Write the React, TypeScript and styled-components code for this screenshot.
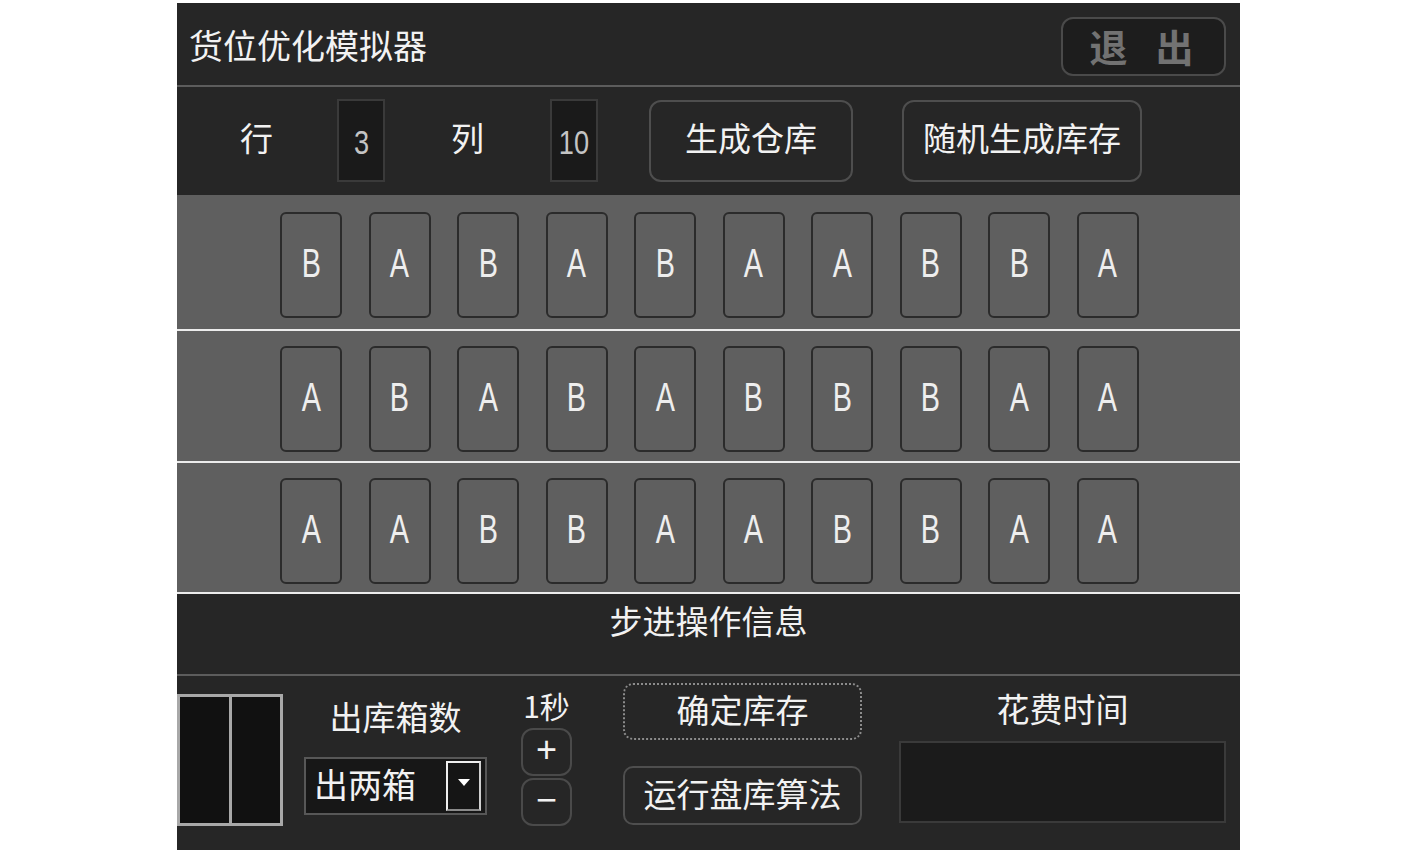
import { ReactElement } from 'react';
import styled, { createGlobalStyle } from 'styled-components';

const GlobalStyle = createGlobalStyle`
    html, body {
        margin: 0;
        padding: 0;
        background: #ffffff;
        overflow: hidden;
    }
    * {
        box-sizing: border-box;
    }
`;

const CJK = `'Noto Sans CJK SC', 'Noto Sans', sans-serif`;

const Panel = styled.div`
    width: 1063px;
    height: 847px;
    margin: 3px auto 0;
    background: #262626;
    color: #f2f2f2;
    font-family: ${CJK};
    display: flex;
    flex-direction: column;
`;

const Header = styled.header`
    height: 84px;
    display: flex;
    align-items: center;
    justify-content: space-between;
    padding: 0 14px 0 12px;
    border-bottom: 2px solid #5c5c5c;
    flex-shrink: 0;
`;

const Title = styled.h1`
    margin: 2px 0 0;
    font-size: 34px;
    font-weight: 400;
    line-height: 1;
`;

const ExitButton = styled.button`
    width: 165px;
    height: 59px;
    margin-top: 4px;
    border: 2px solid #4a4a4a;
    border-radius: 12px;
    background: #1d1d1d;
    color: #727272;
    font-family: ${CJK};
    font-size: 38px;
    font-weight: 700;
    letter-spacing: 28px;
    padding: 0 0 0 24px;
    line-height: 1;
`;

const Toolbar = styled.div`
    height: 108px;
    display: flex;
    align-items: center;
    padding-left: 63px;
    flex-shrink: 0;
`;

const FieldLabel = styled.span<{ $after: number }>`
    font-size: 33px;
    line-height: 1;
    margin-right: ${(p) => p.$after}px;
    margin-top: -8px;
`;

const NumberBox = styled.div<{ $after: number }>`
    width: 48px;
    height: 83px;
    background: #1a1a1a;
    border: 2px solid #3a3a3a;
    color: #c4c4c4;
    font-family: 'Liberation Sans', sans-serif;
    font-size: 34px;
    display: flex;
    align-items: center;
    justify-content: center;
    margin-right: ${(p) => p.$after}px;
    margin-top: -1px;
    padding-top: 4px;
    overflow: hidden;

    & span {
        display: inline-block;
        transform: scaleX(0.8);
    }
`;

const ToolButton = styled.button<{ $width: number; $after?: number }>`
    width: ${(p) => p.$width}px;
    height: 82px;
    margin-right: ${(p) => p.$after ?? 0}px;
    margin-top: -1px;
    border: 2px solid #4e4e4e;
    border-radius: 12px;
    background: transparent;
    color: #f2f2f2;
    font-family: ${CJK};
    font-size: 33px;
    line-height: 1;
    padding: 0 0 6px;
`;

const Grid = styled.div`
    display: flex;
    flex-direction: column;
    flex-shrink: 0;
`;

const ShelfRow = styled.div<{ $height: number; $top: number }>`
    height: ${(p) => p.$height}px;
    background: #5f5f5f;
    border-bottom: 2px solid #ececec;
    display: flex;
    justify-content: center;
    align-items: flex-start;
    gap: 26.5px;
    padding: ${(p) => p.$top}px 0 0 2px;
`;

const Slot = styled.div`
    width: 62px;
    height: 106px;
    border: 2px solid #2b2b2b;
    border-radius: 6px;
    display: flex;
    align-items: center;
    justify-content: center;
    color: #eeeeee;
    font-family: 'Liberation Sans', sans-serif;
    font-size: 40px;
    padding-bottom: 4px;

    & span {
        display: inline-block;
        transform: scaleX(0.72);
    }
`;

const InfoBar = styled.div`
    height: 82px;
    border-bottom: 2px solid #5c5c5c;
    text-align: center;
    font-size: 33px;
    line-height: 1;
    padding-top: 10px;
    flex-shrink: 0;
`;

const Footer = styled.div`
    flex: 1;
    display: flex;
    align-items: flex-start;
`;

const Bins = styled.div`
    width: 106px;
    height: 132px;
    margin-top: 18px;
    border: 3px solid #a8a8a8;
    display: grid;
    grid-template-columns: 1fr 1fr;
    gap: 3px;
    background: #a8a8a8;

    & div {
        background: #111111;
    }
`;

const Column = styled.div<{ $width: number; $left: number }>`
    width: ${(p) => p.$width}px;
    margin-left: ${(p) => p.$left}px;
    display: flex;
    flex-direction: column;
    align-items: center;
`;

const ColumnLabel = styled.div<{ $top: number; $size?: number }>`
    font-size: ${(p) => p.$size ?? 33}px;
    line-height: 1;
    margin-top: ${(p) => p.$top}px;
    white-space: nowrap;
`;

const Select = styled.div`
    width: 183px;
    height: 58px;
    margin-top: 24px;
    background: #171717;
    border: 2px solid #575757;
    display: flex;
    align-items: center;
    justify-content: space-between;
    padding: 0 4px 0 8px;
    font-size: 34px;
    line-height: 1;
`;

const SelectText = styled.span`
    margin-top: -4px;
`;

const DropArrow = styled.div`
    width: 35px;
    height: 50px;
    border: 2px solid #eeeeee;
    border-bottom-color: #8a8a8a;
    border-right-color: #cfcfcf;
    background: #151515;
    display: flex;
    justify-content: center;
    padding-top: 16px;

    &::after {
        content: '';
        width: 0;
        height: 0;
        border-left: 6px solid transparent;
        border-right: 6px solid transparent;
        border-top: 7px solid #ffffff;
    }
`;

const StepButton = styled.button<{ $top: number }>`
    width: 51px;
    height: 48px;
    margin-top: ${(p) => p.$top}px;
    border: 2px solid #4a4a4a;
    border-radius: 12px;
    background: transparent;
    color: #f2f2f2;
    font-family: 'Liberation Sans', sans-serif;
    font-size: 36px;
    line-height: 1;
    padding: 0 0 5px;
`;

const ActionButton = styled.button<{ $top: number; $focused?: boolean }>`
    width: 239px;
    height: ${(p) => (p.$focused ? 57 : 59)}px;
    margin-top: ${(p) => p.$top}px;
    border: 2px ${(p) => (p.$focused ? 'dotted #8c8c8c' : 'solid #4e4e4e')};
    border-radius: 10px;
    background: transparent;
    color: #f2f2f2;
    font-family: ${CJK};
    font-size: 33px;
    line-height: 1;
    padding: 0 0 5px;
`;

const TimeBox = styled.div`
    width: 327px;
    height: 82px;
    margin-top: 16px;
    background: #1b1b1b;
    border: 2px solid #3a3a3a;
`;

const layout: string[][] = [
    ['B', 'A', 'B', 'A', 'B', 'A', 'A', 'B', 'B', 'A'],
    ['A', 'B', 'A', 'B', 'A', 'B', 'B', 'B', 'A', 'A'],
    ['A', 'A', 'B', 'B', 'A', 'A', 'B', 'B', 'A', 'A'],
];

// row heights (incl. white rule) and top padding, as measured per shelf
const rowMetrics = [
    { height: 136, top: 17 },
    { height: 132, top: 15 },
    { height: 131, top: 15 },
];

const App = (): ReactElement => {
    return (
        <>
            <GlobalStyle />
            <Panel>
                <Header>
                    <Title>货位优化模拟器</Title>
                    <ExitButton>退出</ExitButton>
                </Header>

                <Toolbar>
                    <FieldLabel $after={64}>行</FieldLabel>
                    <NumberBox $after={66}>
                        <span>3</span>
                    </NumberBox>
                    <FieldLabel $after={66}>列</FieldLabel>
                    <NumberBox $after={51}>
                        <span>10</span>
                    </NumberBox>
                    <ToolButton $width={204} $after={49}>
                        生成仓库
                    </ToolButton>
                    <ToolButton $width={240}>随机生成库存</ToolButton>
                </Toolbar>

                <Grid>
                    {layout.map((row, rowIndex) => (
                        <ShelfRow
                            key={`row-${rowIndex}`}
                            $height={rowMetrics[rowIndex].height}
                            $top={rowMetrics[rowIndex].top}
                        >
                            {row.map((cell, cellIndex) => (
                                <Slot key={`cell-${rowIndex}-${cellIndex}`}>
                                    <span>{cell}</span>
                                </Slot>
                            ))}
                        </ShelfRow>
                    ))}
                </Grid>

                <InfoBar>步进操作信息</InfoBar>

                <Footer>
                    <Bins>
                        <div />
                        <div />
                    </Bins>

                    <Column $width={183} $left={21}>
                        <ColumnLabel $top={24}>出库箱数</ColumnLabel>
                        <Select>
                            <SelectText>出两箱</SelectText>
                            <DropArrow />
                        </Select>
                    </Column>

                    <Column $width={53} $left={33}>
                        <ColumnLabel $top={14} $size={30}>
                            1秒
                        </ColumnLabel>
                        <StepButton $top={8}>+</StepButton>
                        <StepButton $top={2}>−</StepButton>
                    </Column>

                    <Column $width={239} $left={50}>
                        <ActionButton $top={7} $focused>
                            确定库存
                        </ActionButton>
                        <ActionButton $top={26}>运行盘库算法</ActionButton>
                    </Column>

                    <Column $width={327} $left={37}>
                        <ColumnLabel $top={16}>花费时间</ColumnLabel>
                        <TimeBox />
                    </Column>
                </Footer>
            </Panel>
        </>
    );
};

export default App;
